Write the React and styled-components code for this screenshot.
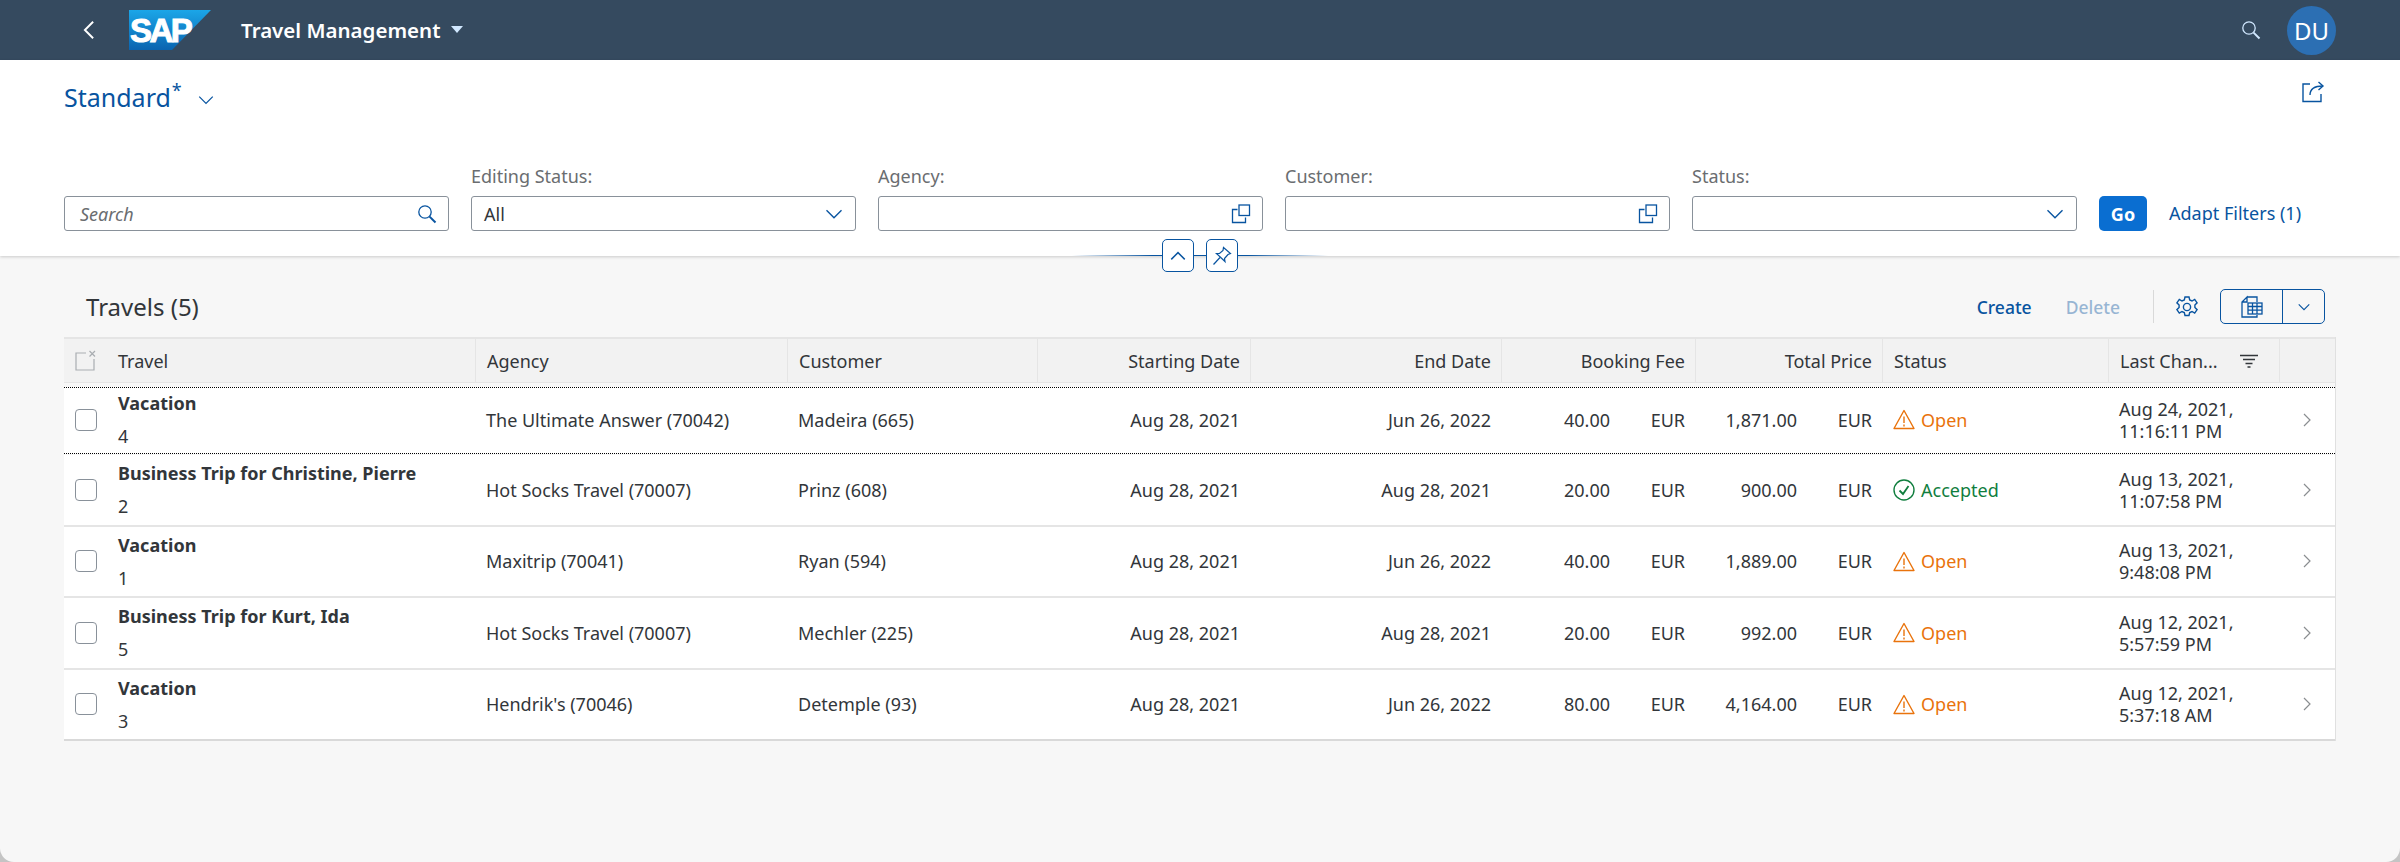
import React from "react";
import styled, { createGlobalStyle } from "styled-components";

const BLUE = "#0854a0";
const COLUMNS = "54px 357px 312px 250px 213px 251px 194px 187px 226px 171px 56px";

const Global = createGlobalStyle`
  html, body { margin: 0; padding: 0; background: #c4c4c4; }
  body { font-family: "Noto Sans", "Open Sans", Arial, sans-serif; color: #32363a; }
`;

const Page = styled.div`
  height: 862px;
  background: #f7f7f7;
  border-radius: 0 0 14px 14px;
  overflow: hidden;
`;

const ShellBar = styled.header`
  height: 60px;
  background: #354a5f;
  display: flex;
  align-items: center;
  padding: 0 64px 0 78px;
`;

const BackButton = styled.span`
  display: flex;
  width: 51px;
`;

const ShellTitle = styled.span`
  margin-left: 30px;
  color: #fff;
  font-size: 20.500px;
  font-weight: 600;
  display: flex;
  align-items: center;
  gap: 11px;
`;

const Spacer = styled.span`
  flex: 1;
`;

const Avatar = styled.span`
  width: 49px;
  height: 49px;
  margin-left: 26px;
  border-radius: 50%;
  background: #2c6fb3;
  color: #fff;
  font-size: 24px;
  display: flex;
  align-items: center;
  justify-content: center;
`;

const FilterHeader = styled.section`
  position: relative;
  height: 196px;
  background: #fff;
  box-shadow: 0 1px 3px rgba(0, 0, 0, 0.18);
  padding: 0 64px;
  box-sizing: border-box;
`;

const VariantRow = styled.div`
  height: 76px;
  display: flex;
  align-items: center;
`;

const VariantName = styled.span`
  color: ${BLUE};
  font-size: 25px;
  line-height: 40px;
  margin-top: -3px;
  display: flex;
`;

const Star = styled.span`
  font-size: 18px;
  line-height: 26px;
  margin-left: 1px;
`;

const ChevronSlot = styled.span`
  display: flex;
  margin-left: 15px;
  margin-top: 4px;
`;

const ShareSlot = styled.span`
  display: flex;
  margin-right: 11px;
  margin-top: -12px;
`;

const FilterRow = styled.div`
  display: flex;
  align-items: flex-end;
  gap: 22px;
  margin-top: 28px;
`;

const Field = styled.div`
  width: 385px;
  display: flex;
  flex-direction: column;
`;

const FieldLabel = styled.label`
  color: #6a6d70;
  font-size: 18px;
  line-height: 24px;
  margin-bottom: 8px;
`;

const InputBox = styled.div`
  height: 35px;
  box-sizing: border-box;
  border: 1px solid #89919a;
  border-radius: 3px;
  display: flex;
  align-items: center;
  justify-content: space-between;
  padding: 0 11px 0 ${(p) => (p.$placeholder ? "15px" : "12px")};
  font-size: 18px;
  font-style: ${(p) => (p.$placeholder ? "italic" : "normal")};
  color: ${(p) => (p.$placeholder ? "#6a6d70" : "#32363a")};
`;

const GoButton = styled.button`
  width: 48px;
  height: 35px;
  border: 0;
  border-radius: 5px;
  background: #0a6ed1;
  color: #fff;
  font: 700 18px "Noto Sans", sans-serif;
  padding: 0;
`;

const AdaptLink = styled.span`
  color: ${BLUE};
  font-size: 18px;
  line-height: 35px;
`;

const CollapseBar = styled.div`
  position: absolute;
  left: 1000px;
  top: 179px;
  width: 400px;
  height: 33px;
  display: flex;
  justify-content: center;
  gap: 12px;
  background: linear-gradient(to right, transparent 18%, ${BLUE} 38%, ${BLUE} 62%, transparent 82%) center / 100% 1px no-repeat;
`;

const CollapseButton = styled.span`
  width: 32px;
  height: 33px;
  box-sizing: border-box;
  border: 1px solid ${BLUE};
  border-radius: 5px;
  background: #fff;
  display: flex;
  align-items: center;
  justify-content: center;
`;

const Content = styled.main`
  padding: 0 65px 0 64px;
`;

const TableToolbar = styled.div`
  height: 81px;
  box-sizing: border-box;
  padding: 20px 10px 0 22px;
  display: flex;
  align-items: center;
`;

const TableTitle = styled.h2`
  margin: 0;
  font-size: 24px;
  font-weight: 400;
`;

const ToolbarAction = styled.span`
  font-size: 17.500px;
  font-weight: 500;
  color: ${BLUE};
  opacity: ${(p) => (p.$disabled ? 0.4 : 1)};
  margin-right: ${(p) => (p.$disabled ? "33px" : "34px")};
`;

const ToolbarSep = styled.span`
  width: 1px;
  height: 33px;
  background: #d9d9d9;
  margin-right: 21px;
`;

const GearSlot = styled.span`
  display: flex;
  margin-right: 21px;
`;

const SplitButton = styled.span`
  width: 105px;
  height: 35px;
  box-sizing: border-box;
  border: 1px solid ${BLUE};
  border-radius: 5px;
  display: grid;
  grid-template-columns: 61px 1fr;
`;

const SplitPart = styled.span`
  display: flex;
  align-items: center;
  justify-content: center;
  border-left: ${(p) => (p.$divided ? `1px solid ${BLUE}` : "0")};
`;

const Table = styled.div`
  width: 2271px;
  border-right: 1px solid #e0e0e0;
`;

const HeaderRow = styled.div`
  display: grid;
  grid-template-columns: ${COLUMNS};
  height: 46px;
  box-sizing: border-box;
  background: #f2f2f2;
  border-top: 2px solid #e5e5e5;
  border-bottom: 1px solid #e5e5e5;
  margin-bottom: 4px;
`;

const HeaderCell = styled.div`
  display: flex;
  align-items: center;
  justify-content: ${(p) => (p.$right ? "flex-end" : "flex-start")};
  gap: 22px;
  padding: 0 10px 0 11px;
  font-size: 18px;
  border-left: 1px solid #e5e5e5;
  min-width: 0;
`;

const TitleHeader = styled(HeaderCell)`
  padding-left: 0;
  border-left: 0;
`;

const SelectHeader = styled.div`
  display: flex;
  align-items: center;
  padding-left: 11px;
`;

const Row = styled.div`
  display: grid;
  grid-template-columns: ${COLUMNS};
  height: ${(p) => (p.$focused ? "67px" : "71.500px")};
  box-sizing: border-box;
  background: #fff;
  border-bottom: ${(p) => (p.$last ? "2px solid #d9d9d9" : "2px solid #e5e5e5")};
  font-size: 18px;
  ${(p) =>
    p.$focused &&
    `
    border-top: 1px dotted #000;
    border-bottom: 1px dotted #000;
    margin-bottom: 1px;
    padding-bottom: 2px;
  `}
`;

const Cell = styled.div`
  display: flex;
  align-items: center;
  justify-content: ${(p) => (p.$right ? "flex-end" : "flex-start")};
  padding: 0 10px 0 11px;
  min-width: 0;
`;

const Checkbox = styled.span`
  width: 22px;
  height: 22px;
  margin-left: 11px;
  box-sizing: border-box;
  border: 1px solid #89919a;
  border-radius: 4px;
  background: #fff;
  align-self: center;
`;

const TravelCell = styled.div`
  display: flex;
  flex-direction: column;
  justify-content: center;
  gap: 9px;
`;

const TravelName = styled.span`
  font-weight: 700;
  line-height: 24px;
`;

const TravelId = styled.span`
  line-height: 24px;
`;

const Amount = styled.span`
  text-align: right;
`;

const Unit = styled.span`
  width: 75px;
  text-align: right;
  flex: none;
`;

const StatusText = styled.span`
  display: flex;
  align-items: center;
  gap: 6px;
  color: ${(p) => (p.$accepted ? "#107e3e" : "#e9730c")};
`;

const ChangedText = styled.span`
  line-height: 22px;
`;

const NavCell = styled.div`
  display: flex;
  align-items: center;
  justify-content: center;
`;

const SapLogo = () => (
  <svg width="82" height="40" viewBox="0 0 82 40">
    <defs>
      <linearGradient id="sapFill" x1="0" y1="0" x2="0" y2="1">
        <stop offset="0" stopColor="#1ba6e8" />
        <stop offset="1" stopColor="#0a64b0" />
      </linearGradient>
    </defs>
    <polygon points="0,0 82,0 43,40 0,40" fill="url(#sapFill)" />
    <text x="1" y="32" fontFamily="Liberation Sans, sans-serif" fontWeight="700" fontSize="33" letterSpacing="-2.5" fill="#fff" stroke="#fff" strokeWidth="1">SAP</text>
  </svg>
);

const Chevron = ({ dir = "down", size = 16, color = BLUE, width = 1.3 }) => {
  const pts = {
    down: "2,5 8,11 14,5",
    up: "2,11 8,5 14,11",
    left: "11,2 5,8 11,14",
    right: "5,2 11,8 5,14",
  }[dir];
  return (
    <svg width={size} height={size} viewBox="0 0 16 16" fill="none">
      <polyline points={pts} stroke={color} strokeWidth={width} />
    </svg>
  );
};

const SearchIcon = ({ color, size = 20 }) => (
  <svg width={size} height={size} viewBox="0 0 20 20" fill="none" stroke={color}>
    <circle cx="8" cy="8" r="6.2" strokeWidth="1.3" />
    <line x1="12.6" y1="12.6" x2="18.5" y2="18.5" strokeWidth="2" />
  </svg>
);

const ValueHelp = () => (
  <svg width="20" height="20" viewBox="0 0 20 20" fill="none" stroke={BLUE} strokeWidth="1.3">
    <path d="M6.5 5.5H1.5V18.5H14.5V13.5" />
    <rect x="8" y="1" width="10.5" height="10.5" />
  </svg>
);

const ShareIcon = () => (
  <svg width="24" height="22" viewBox="0 0 24 22" fill="none" stroke={BLUE} strokeWidth="1.4">
    <path d="M9 3H2V20.5H20V13" />
    <path d="M9 14C9 8 13 5 22 5" />
    <polyline points="17.5,1 22,5 17.5,9" />
  </svg>
);

const PinIcon = () => (
  <svg width="20" height="20" viewBox="0 0 20 20" fill="none" stroke={BLUE} strokeWidth="1.2">
    <path d="M11.500 1.500L18.500 7.500L16 8.500L12.500 12.500L13 15.500L4.500 7.500L7.500 7.500L11 4.500Z" />
    <line x1="8" y1="11.500" x2="1.500" y2="18.500" />
  </svg>
);

const GearIcon = () => (
  <svg width="24" height="24" viewBox="0 0 24 24" fill="none" stroke={BLUE} strokeWidth="1.4">
    <circle cx="12" cy="12" r="3.6" />
    <path d="M10 2h4l.7 3 2.3 1 2.7-1.600 2.400 3.400-2.200 2.200v2.500l2.200 2.200-2.400 3.400-2.700-1.600-2.300 1-.7 3h-4l-.7-3-2.300-1-2.700 1.600-2.400-3.400 2.200-2.200v-2.500L1.900 7.800 4.300 4.400 7 6l2.300-1z" />
  </svg>
);

const VariantTableIcon = () => (
  <svg width="24" height="24" viewBox="0 0 24 24" fill="none" stroke={BLUE} strokeWidth="1.3">
    <path d="M7 2H17V7M17 20V22H2V7L7 2V7H2" />
    <rect x="8" y="8" width="14" height="11" fill="#f7f7f7" />
    <path d="M8 11.500H22M8 15.200H22M12.500 8V19M17 8V19" />
  </svg>
);

const ClearSelectionIcon = () => (
  <svg width="21" height="21" viewBox="0 0 21 21" fill="none" stroke="#a9adb1" strokeWidth="1.2">
    <path d="M11 3H1V20H19V9" />
    <path d="M14.500 1L20 6.500M20 1L14.500 6.500" />
  </svg>
);

const SortIcon = () => (
  <svg width="18" height="14" viewBox="0 0 18 14" fill="none" stroke="#32363a" strokeWidth="1.3">
    <path d="M0 1.500H18M3 5.500H15M5.500 9.500H12.500M7.500 13H10.500" />
  </svg>
);

const WarningIcon = () => (
  <svg width="22" height="21" viewBox="0 0 22 21" fill="none" stroke="#e9730c" strokeWidth="1.4">
    <path d="M11 1.500L21 19.500H1Z" strokeLinejoin="round" />
    <path d="M11 7.500V14M11 15.500V17.500" />
  </svg>
);

const SuccessIcon = () => (
  <svg width="22" height="22" viewBox="0 0 22 22" fill="none" stroke="#107e3e" strokeWidth="1.4">
    <circle cx="11" cy="11" r="10" />
    <polyline points="6.500,11.500 10,15 15.500,7" strokeWidth="1.800" />
  </svg>
);

const COLUMN_HEADERS = [
  { label: "Agency" },
  { label: "Customer" },
  { label: "Starting Date", right: true },
  { label: "End Date", right: true },
  { label: "Booking Fee", right: true },
  { label: "Total Price", right: true },
  { label: "Status" },
];

const TRAVELS = [
  { name: "Vacation", id: 4, agency: "The Ultimate Answer (70042)", customer: "Madeira (665)", start: "Aug 28, 2021", end: "Jun 26, 2022", fee: "40.00", total: "1,871.00", status: "Open", date: "Aug 24, 2021,", time: "11:16:11 PM" },
  { name: "Business Trip for Christine, Pierre", id: 2, agency: "Hot Socks Travel (70007)", customer: "Prinz (608)", start: "Aug 28, 2021", end: "Aug 28, 2021", fee: "20.00", total: "900.00", status: "Accepted", date: "Aug 13, 2021,", time: "11:07:58 PM" },
  { name: "Vacation", id: 1, agency: "Maxitrip (70041)", customer: "Ryan (594)", start: "Aug 28, 2021", end: "Jun 26, 2022", fee: "40.00", total: "1,889.00", status: "Open", date: "Aug 13, 2021,", time: "9:48:08 PM" },
  { name: "Business Trip for Kurt, Ida", id: 5, agency: "Hot Socks Travel (70007)", customer: "Mechler (225)", start: "Aug 28, 2021", end: "Aug 28, 2021", fee: "20.00", total: "992.00", status: "Open", date: "Aug 12, 2021,", time: "5:57:59 PM" },
  { name: "Vacation", id: 3, agency: "Hendrik's (70046)", customer: "Detemple (93)", start: "Aug 28, 2021", end: "Jun 26, 2022", fee: "80.00", total: "4,164.00", status: "Open", date: "Aug 12, 2021,", time: "5:37:18 AM" },
];

const FILTERS = [
  { label: "Editing Status:", value: "All", icon: "chevron" },
  { label: "Agency:", icon: "help" },
  { label: "Customer:", icon: "help" },
  { label: "Status:", icon: "chevron" },
];

const App = () => (
  <Page>
    <Global />
    <ShellBar>
      <BackButton>
        <Chevron dir="left" size={22} color="#fff" width={1.4} />
      </BackButton>
      <SapLogo />
      <ShellTitle>
        Travel Management
        <svg width="12" height="8" viewBox="0 0 12 8">
          <polygon points="0,0 12,0 6,7" fill="#d1e8ff" />
        </svg>
      </ShellTitle>
      <Spacer />
      <SearchIcon color="#d1e8ff" />
      <Avatar>DU</Avatar>
    </ShellBar>

    <FilterHeader>
      <VariantRow>
        <VariantName>
          Standard<Star>*</Star>
        </VariantName>
        <ChevronSlot>
          <Chevron size={18} width={1.1} />
        </ChevronSlot>
        <Spacer />
        <ShareSlot>
          <ShareIcon />
        </ShareSlot>
      </VariantRow>
      <FilterRow>
        <Field>
          <InputBox $placeholder>
            Search
            <SearchIcon color={BLUE} />
          </InputBox>
        </Field>
        {FILTERS.map((f) => (
          <Field key={f.label}>
            <FieldLabel>{f.label}</FieldLabel>
            <InputBox>
              <span>{f.value}</span>
              {f.icon === "help" ? <ValueHelp /> : <Chevron size={20} width={1.1} />}
            </InputBox>
          </Field>
        ))}
        <GoButton>Go</GoButton>
        <AdaptLink>Adapt Filters (1)</AdaptLink>
      </FilterRow>
      <CollapseBar>
        <CollapseButton>
          <Chevron dir="up" size={18} />
        </CollapseButton>
        <CollapseButton>
          <PinIcon />
        </CollapseButton>
      </CollapseBar>
    </FilterHeader>

    <Content>
      <TableToolbar>
        <TableTitle>Travels (5)</TableTitle>
        <Spacer />
        <ToolbarAction>Create</ToolbarAction>
        <ToolbarAction $disabled>Delete</ToolbarAction>
        <ToolbarSep />
        <GearSlot>
          <GearIcon />
        </GearSlot>
        <SplitButton>
          <SplitPart>
            <VariantTableIcon />
          </SplitPart>
          <SplitPart $divided>
            <Chevron size={14} />
          </SplitPart>
        </SplitButton>
      </TableToolbar>

      <Table>
        <HeaderRow>
          <SelectHeader>
            <ClearSelectionIcon />
          </SelectHeader>
          <TitleHeader>Travel</TitleHeader>
          {COLUMN_HEADERS.map((h) => (
            <HeaderCell key={h.label} $right={h.right}>
              {h.label}
            </HeaderCell>
          ))}
          <HeaderCell>
            Last Chan...
            <SortIcon />
          </HeaderCell>
          <HeaderCell />
        </HeaderRow>

        {TRAVELS.map((t, i) => (
          <Row key={t.id} $focused={i === 0} $last={i === TRAVELS.length - 1}>
            <Checkbox />
            <TravelCell>
              <TravelName>{t.name}</TravelName>
              <TravelId>{t.id}</TravelId>
            </TravelCell>
            <Cell>{t.agency}</Cell>
            <Cell>{t.customer}</Cell>
            <Cell $right>{t.start}</Cell>
            <Cell $right>{t.end}</Cell>
            <Cell $right>
              <Amount>{t.fee}</Amount>
              <Unit>EUR</Unit>
            </Cell>
            <Cell $right>
              <Amount>{t.total}</Amount>
              <Unit>EUR</Unit>
            </Cell>
            <Cell>
              <StatusText $accepted={t.status === "Accepted"}>
                {t.status === "Accepted" ? <SuccessIcon /> : <WarningIcon />}
                {t.status}
              </StatusText>
            </Cell>
            <Cell>
              <ChangedText>
                {t.date}
                <br />
                {t.time}
              </ChangedText>
            </Cell>
            <NavCell>
              <Chevron dir="right" size={16} color="#8a8d90" width={1.2} />
            </NavCell>
          </Row>
        ))}
      </Table>
    </Content>
  </Page>
);

export default App;
